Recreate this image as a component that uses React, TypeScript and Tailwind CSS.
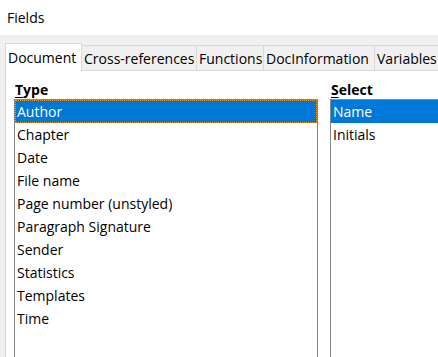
import React from "react"

const tabs = [
	{ title: "Document", width: "w-[77px]" },
	{ title: "Cross-references", width: "w-[115px]" },
	{ title: "Functions", width: "w-[67px]" },
	{ title: "DocInformation", width: "w-[111px]" },
	{ title: "Variables", width: "w-[80px]" },
]

const types = [
	"Author",
	"Chapter",
	"Date",
	"File name",
	"Page number (unstyled)",
	"Paragraph Signature",
	"Sender",
	"Statistics",
	"Templates",
	"Time",
]

const selects = ["Name", "Initials"]

const ListBox = ({
	items,
	focused,
}: {
	items: string[]
	focused?: boolean
}) => {
	return (
		<div className="flex-1 border border-b-0 border-[#828790] bg-white">
			{items.map((item, i) => (
				<div
					key={item}
					className={
						i === 0
							? focused
								? "h-[23px] leading-[24px] pl-[2px] bg-[#0078d7] text-white outline-1 outline-dotted -outline-offset-1 outline-[#e8962a]"
								: "h-[23px] leading-[24px] pl-[2px] bg-[#0078d7] text-white"
							: "h-[23px] leading-[24px] pl-[2px] text-black"
					}
				>
					{item}
				</div>
			))}
		</div>
	)
}

const Label = ({ first, rest }: { first: string; rest: string }) => (
	<div className="h-[20px] leading-[22px] font-bold text-black pl-px">
		<span className="underline underline-offset-2">{first}</span>
		{rest}
	</div>
)

export default function App() {
	return (
		<div
			className="w-[438px] h-[357px] overflow-hidden bg-[#f0f0f0] flex flex-col text-[14px] text-black"
			style={{ fontFamily: '"Open Sans", "Noto Sans", sans-serif' }}
		>
			<div className="h-[35px] shrink-0 bg-white pl-[7px] flex items-center">
				Fields
			</div>

			<div className="h-[35px] shrink-0 pt-[8px] pl-[5px] flex items-end">
				{tabs.map((tab, i) =>
					i === 0 ? (
						<div
							key={tab.title}
							className={`${tab.width} shrink-0 h-[28px] -mb-px relative z-10 bg-white border-l border-t border-r border-[#d9d9d9] pl-[2px] leading-[28px] whitespace-nowrap`}
						>
							{tab.title}
						</div>
					) : (
						<div
							key={tab.title}
							className={`${tab.width} shrink-0 h-[25px] border-t border-r border-[#d9d9d9] pl-[2px] leading-[26px] whitespace-nowrap`}
						>
							{tab.title}
						</div>
					),
				)}
			</div>

			<div className="flex-1 ml-[5px] bg-white border-l border-t border-[#d9d9d9] pl-[8px] pt-[8px] flex gap-[12px]">
				<div className="w-[304px] shrink-0 flex flex-col">
					<Label first="T" rest="ype" />
					<ListBox items={types} focused />
				</div>
				<div className="w-[140px] shrink-0 flex flex-col">
					<Label first="S" rest="elect" />
					<ListBox items={selects} />
				</div>
			</div>
		</div>
	)
}
